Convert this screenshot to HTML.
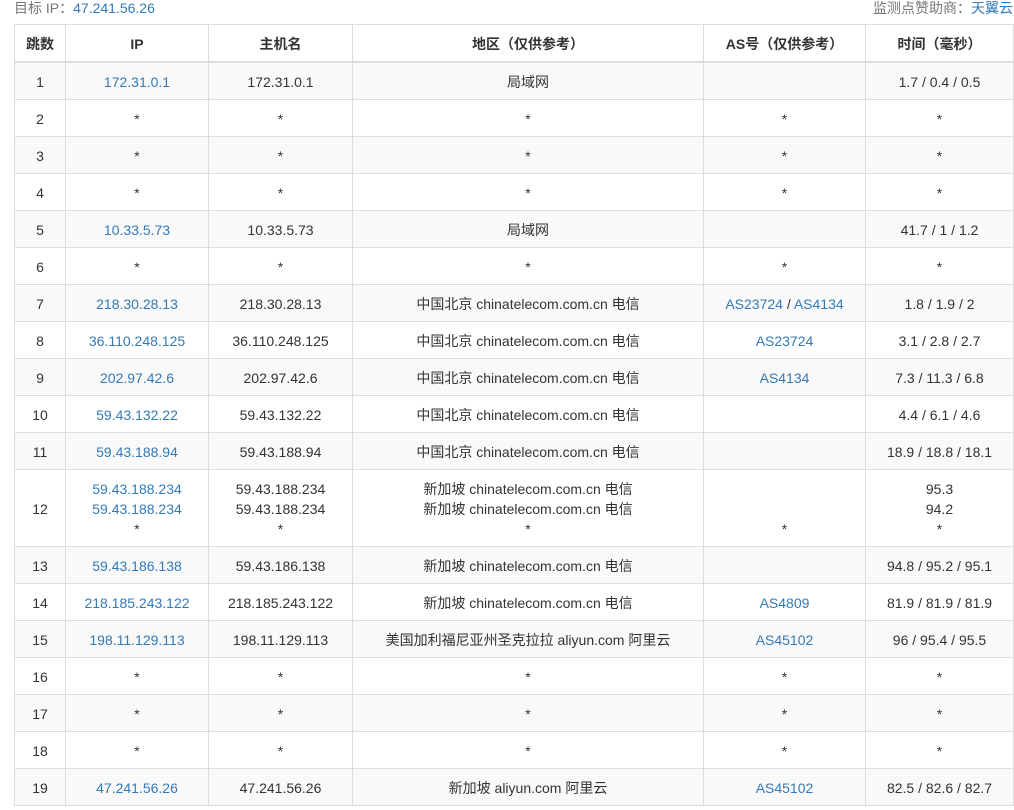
<!DOCTYPE html>
<html><head><meta charset="utf-8"><style>
body{margin:0;background:#fff;font-family:"Liberation Sans","Noto Sans CJK SC",sans-serif;font-size:14px;color:#333;width:1014px;height:810px;overflow:hidden;position:relative}
.top{position:absolute;top:-2px;left:14px;right:1px;height:20px;line-height:20px;color:#777}
.top .r{position:absolute;right:0;top:0}
a{color:#337ab7;text-decoration:none}
table{position:absolute;left:14px;top:24px;border-collapse:collapse;table-layout:fixed;width:999px}
td,th{border:1px solid #ddd;text-align:center;padding:9px 4px 7px;line-height:20px;height:20px;white-space:nowrap;overflow:hidden}
th{font-weight:bold;border-bottom:2px solid #ddd}
tbody tr:nth-child(odd){background:#f9f9f9}
</style></head><body>
<div class="top">目标 IP：<a>47.241.56.26</a><span class="r">监测点赞助商：<a>天翼云</a></span></div>
<table>
<colgroup><col style="width:51px"><col style="width:143px"><col style="width:144px"><col style="width:351px"><col style="width:162px"><col style="width:148px"></colgroup>
<thead><tr><th>跳数</th><th>IP</th><th>主机名</th><th>地区（仅供参考）</th><th>AS号（仅供参考）</th><th>时间（毫秒）</th></tr></thead>
<tbody>
<tr><td>1</td><td><a>172.31.0.1</a></td><td>172.31.0.1</td><td>局域网</td><td></td><td>1.7 / 0.4 / 0.5</td></tr>
<tr><td>2</td><td>*</td><td>*</td><td>*</td><td>*</td><td>*</td></tr>
<tr><td>3</td><td>*</td><td>*</td><td>*</td><td>*</td><td>*</td></tr>
<tr><td>4</td><td>*</td><td>*</td><td>*</td><td>*</td><td>*</td></tr>
<tr><td>5</td><td><a>10.33.5.73</a></td><td>10.33.5.73</td><td>局域网</td><td></td><td>41.7 / 1 / 1.2</td></tr>
<tr><td>6</td><td>*</td><td>*</td><td>*</td><td>*</td><td>*</td></tr>
<tr><td>7</td><td><a>218.30.28.13</a></td><td>218.30.28.13</td><td>中国北京 chinatelecom.com.cn 电信</td><td><a>AS23724</a> / <a>AS4134</a></td><td>1.8 / 1.9 / 2</td></tr>
<tr><td>8</td><td><a>36.110.248.125</a></td><td>36.110.248.125</td><td>中国北京 chinatelecom.com.cn 电信</td><td><a>AS23724</a></td><td>3.1 / 2.8 / 2.7</td></tr>
<tr><td>9</td><td><a>202.97.42.6</a></td><td>202.97.42.6</td><td>中国北京 chinatelecom.com.cn 电信</td><td><a>AS4134</a></td><td>7.3 / 11.3 / 6.8</td></tr>
<tr><td>10</td><td><a>59.43.132.22</a></td><td>59.43.132.22</td><td>中国北京 chinatelecom.com.cn 电信</td><td></td><td>4.4 / 6.1 / 4.6</td></tr>
<tr><td>11</td><td><a>59.43.188.94</a></td><td>59.43.188.94</td><td>中国北京 chinatelecom.com.cn 电信</td><td></td><td>18.9 / 18.8 / 18.1</td></tr>
<tr><td style="height:60px">12</td><td><a>59.43.188.234</a><br><a>59.43.188.234</a><br>*</td><td>59.43.188.234<br>59.43.188.234<br>*</td><td>新加坡 chinatelecom.com.cn 电信<br>新加坡 chinatelecom.com.cn 电信<br>*</td><td><br><br>*</td><td>95.3<br>94.2<br>*</td></tr>
<tr><td>13</td><td><a>59.43.186.138</a></td><td>59.43.186.138</td><td>新加坡 chinatelecom.com.cn 电信</td><td></td><td>94.8 / 95.2 / 95.1</td></tr>
<tr><td>14</td><td><a>218.185.243.122</a></td><td>218.185.243.122</td><td>新加坡 chinatelecom.com.cn 电信</td><td><a>AS4809</a></td><td>81.9 / 81.9 / 81.9</td></tr>
<tr><td>15</td><td><a>198.11.129.113</a></td><td>198.11.129.113</td><td>美国加利福尼亚州圣克拉拉 aliyun.com 阿里云</td><td><a>AS45102</a></td><td>96 / 95.4 / 95.5</td></tr>
<tr><td>16</td><td>*</td><td>*</td><td>*</td><td>*</td><td>*</td></tr>
<tr><td>17</td><td>*</td><td>*</td><td>*</td><td>*</td><td>*</td></tr>
<tr><td>18</td><td>*</td><td>*</td><td>*</td><td>*</td><td>*</td></tr>
<tr><td>19</td><td><a>47.241.56.26</a></td><td>47.241.56.26</td><td>新加坡 aliyun.com 阿里云</td><td><a>AS45102</a></td><td>82.5 / 82.6 / 82.7</td></tr>
</tbody></table>
</body></html>
